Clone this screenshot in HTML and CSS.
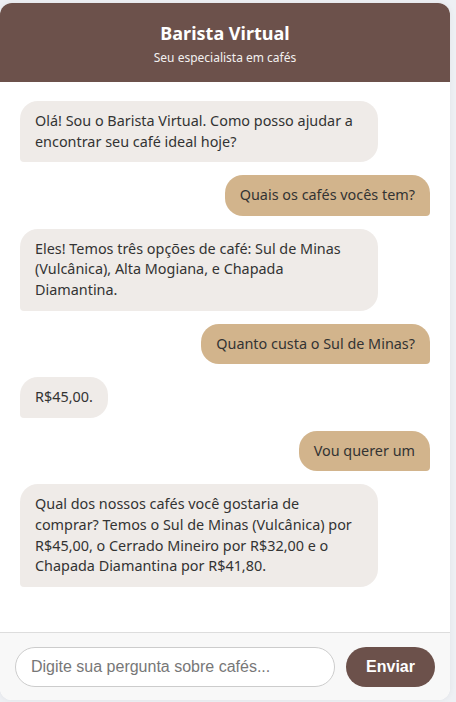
FILE: index.html
```html
<!DOCTYPE html>
<html lang="pt-BR">
<head>
<meta charset="utf-8">
<title>Barista Virtual</title>
<link rel="stylesheet" href="styles.css">
</head>
<body>
<div class="chat">
  <header class="chat-header">
    <h1 class="chat-title">Barista Virtual</h1>
    <p class="chat-subtitle">Seu especialista em cafés</p>
  </header>
  <main class="messages">
    <div class="msg bot">Olá! Sou o Barista Virtual. Como posso ajudar a encontrar seu café ideal hoje?</div>
    <div class="msg user">Quais os cafés vocês tem?</div>
    <div class="msg bot">Eles! Temos três opções de café: Sul de Minas (Vulcânica), Alta Mogiana, e Chapada Diamantina.</div>
    <div class="msg user">Quanto custa o Sul de Minas?</div>
    <div class="msg bot">R$45,00.</div>
    <div class="msg user">Vou querer um</div>
    <div class="msg bot">Qual dos nossos cafés você gostaria de comprar? Temos o Sul de Minas (Vulcânica) por R$45,00, o Cerrado Mineiro por R$32,00 e o Chapada Diamantina por R$41,80.</div>
  </main>
  <footer class="chat-input">
    <input class="input" type="text" placeholder="Digite sua pergunta sobre cafés...">
    <button class="send" type="button">Enviar</button>
  </footer>
</div>
</body>
</html>
```
FILE: styles.css
```css
* { box-sizing: border-box; }
html, body { margin: 0; padding: 0; }
body {
  background: #eef0f4;
  font-family: "Segoe UI", "Noto Sans", sans-serif;
  height: 702px;
  overflow: hidden;
}
.chat {
  width: 450px;
  height: 697px;
  margin-top: 3px;
  background: #fff;
  border-radius: 12px;
  overflow: hidden;
  display: flex;
  flex-direction: column;
  box-shadow: 0 0 6px rgba(0,0,0,0.06);
}
.chat-header {
  background: #6c514b;
  color: #fff;
  text-align: center;
  height: 79px;
  padding-top: 18px;
}
.chat-title {
  margin: 0;
  font-size: 18px;
  font-weight: 700;
  line-height: 25px;
}
.chat-subtitle {
  margin: 4px 0 0;
  font-size: 12px;
  line-height: 16px;
  opacity: 0.92;
}
.messages {
  flex: 1;
  padding: 19px 20px;
  display: flex;
  flex-direction: column;
  gap: 13px;
  overflow: hidden;
}
.msg {
  max-width: 358px;
  padding: 10px 15px;
  font-size: 14.4px;
  line-height: 20.6px;
  color: #333;
  border-radius: 18px;
}
.msg.bot {
  align-self: flex-start;
  background: #efebe8;
  border-bottom-left-radius: 4px;
}
.msg.user {
  align-self: flex-end;
  background: #d2b48c;
  border-bottom-right-radius: 4px;
}
.chat-input {
  display: flex;
  align-items: center;
  gap: 11px;
  padding: 15px;
  background: #f8f8f8;
  border-top: 1px solid #ddd;
  height: 68px;
}
.input {
  flex: 1;
  height: 40px;
  border: 1px solid #ccc;
  border-radius: 20px;
  padding: 0 15px;
  font-family: "Liberation Sans", Arial, sans-serif;
  font-size: 16px;
  background: #fff;
  outline: none;
}
.input::placeholder { color: #777; }
.send {
  width: 89px;
  height: 40px;
  border: none;
  border-radius: 20px;
  background: #6c514b;
  color: #fff;
  font-family: "Liberation Sans", Arial, sans-serif;
  font-size: 16px;
  font-weight: 700;
  cursor: pointer;
}
```
